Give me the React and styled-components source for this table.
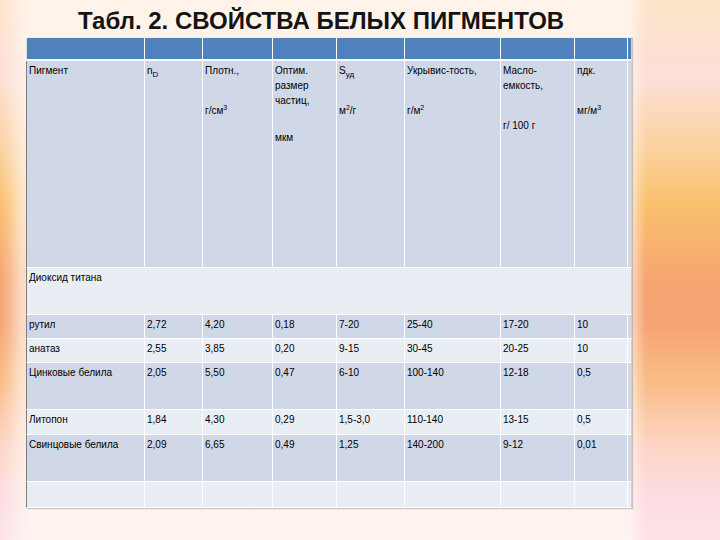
import React from 'react';
import styled, { createGlobalStyle } from 'styled-components';

const GlobalStyle = createGlobalStyle`
  html, body {
    margin: 0;
    padding: 0;
  }
  body {
    font-family: "Liberation Sans", Arial, sans-serif;
  }
`;

const columns = [119, 58, 70, 64, 68, 96, 74, 53, 4];

const rows = [
  { height: 47, tone: 'light', merged: 'Диоксид титана' },
  { height: 24, tone: 'dark', cells: ['рутил', '2,72', '4,20', '0,18', '7-20', '25-40', '17-20', '10'] },
  { height: 24, tone: 'light', cells: ['анатаз', '2,55', '3,85', '0,20', '9-15', '30-45', '20-25', '10'] },
  { height: 47, tone: 'dark', cells: ['Цинковые белила', '2,05', '5,50', '0,47', '6-10', '100-140', '12-18', '0,5'] },
  { height: 25, tone: 'light', cells: ['Литопон', '1,84', '4,30', '0,29', '1,5-3,0', '110-140', '13-15', '0,5'] },
  { height: 47, tone: 'dark', cells: ['Свинцовые белила', '2,09', '6,65', '0,49', '1,25', '140-200', '9-12', '0,01'] },
  { height: 26, tone: 'light', cells: ['', '', '', '', '', '', '', ''] },
];

const tones = {
  dark: '#d0d8e8',
  light: '#e9edf4',
};

export default function App() {
  return (
    <>
      <GlobalStyle />
      <Slide>
        <Title>Табл. 2. СВОЙСТВА БЕЛЫХ ПИГМЕНТОВ</Title>
        <Table>
          <colgroup>
            {columns.map((w, i) => <col key={i} style={{ width: w }} />)}
          </colgroup>
          <thead>
            <HeadRow>
              {columns.map((_, i) => <HeadCell key={i} />)}
            </HeadRow>
          </thead>
          <tbody>
            <Row $height={207}>
              <Cell $tone="dark" $first>
                <Line>Пигмент</Line>
              </Cell>
              <Cell $tone="dark">
                <Line>n<Sub>D</Sub></Line>
              </Cell>
              <Cell $tone="dark">
                <Line>Плотн.,</Line>
                <Unit>г/см<Sup>3</Sup></Unit>
              </Cell>
              <Cell $tone="dark">
                <Line>Оптим.</Line>
                <Line>размер</Line>
                <Line>частиц,</Line>
                <Unit $gap={22}>мкм</Unit>
              </Cell>
              <Cell $tone="dark">
                <Line>S<Sub>уд</Sub></Line>
                <Unit>м<Sup>2</Sup>/г</Unit>
              </Cell>
              <Cell $tone="dark">
                <Line>Укрывис-тость,</Line>
                <Unit>г/м<Sup>2</Sup></Unit>
              </Cell>
              <Cell $tone="dark">
                <Line>Масло-</Line>
                <Line>емкость,</Line>
                <Unit>г/ 100 г</Unit>
              </Cell>
              <Cell $tone="dark">
                <Line>пдк.</Line>
                <Unit>мг/м<Sup>3</Sup></Unit>
              </Cell>
              <Cell $tone="dark" />
            </Row>
            {rows.map((row, r) => (
              <Row key={r} $height={row.height}>
                {row.merged ? (
                  <Cell $tone={row.tone} $first colSpan={9}>
                    <Line>{row.merged}</Line>
                  </Cell>
                ) : (
                  <>
                    {row.cells.map((text, c) => (
                      <Cell key={c} $tone={row.tone} $first={c === 0}>
                        <Line>{text}</Line>
                      </Cell>
                    ))}
                    <Cell $tone={row.tone} />
                  </>
                )}
              </Row>
            ))}
          </tbody>
        </Table>
      </Slide>
    </>
  );
}

const Slide = styled.div`
  width: 720px;
  height: 540px;
  overflow: hidden;
  box-sizing: border-box;
  padding-left: 26px;
  background:
    linear-gradient(to right,
      rgba(255, 247, 242, 0) 0px,
      rgba(255, 247, 242, 0.25) 10px,
      rgba(255, 247, 242, 0.6) 20px,
      rgba(255, 247, 242, 0.78) 30px,
      rgba(255, 247, 242, 0.78) 630px,
      rgba(255, 247, 242, 0.3) 638px,
      rgba(255, 247, 242, 0) 646px),
    linear-gradient(to bottom,
      #fde5c9 0%,
      #fddfd8 14%,
      #fbd19c 28%,
      #f9c06c 38%,
      #f7a471 52%,
      #f6a474 60%,
      #f9bb84 70%,
      #fcd4c2 82%,
      #fddde2 92%,
      #fde3e9 100%);
`;

const Title = styled.h1`
  margin: 0 0 3px 0;
  padding: 7px 0 0 52px;
  height: 27px;
  font-family: "Liberation Sans", Arial, sans-serif;
  font-size: 24px;
  line-height: 27px;
  font-weight: bold;
  color: #141414;
  white-space: nowrap;
`;

const Table = styled.table`
  width: 606px;
  table-layout: fixed;
  border-collapse: separate;
  border-spacing: 0;
  box-shadow: 1px 1px 1px rgba(120, 110, 100, 0.35);
  font-family: "Liberation Sans", Arial, sans-serif;
  font-size: 10px;
  color: #000;
`;

const HeadRow = styled.tr`
  height: 24px;
`;

const HeadCell = styled.th`
  box-sizing: border-box;
  padding: 0;
  background: #4f81bd;
  border-right: 1px solid #fff;
  border-bottom: 2px solid #fff;
  border-top: 1px solid #e8eef6;

  &:first-child {
    border-left: 1px solid #dfe6f0;
  }
  &:last-child {
    border-right: 1px solid #c9cfd8;
  }
`;

const Row = styled.tr`
  height: ${props => props.$height}px;
`;

const Cell = styled.td`
  box-sizing: border-box;
  vertical-align: top;
  padding: 2px 0 0 2px;
  background: ${props => tones[props.$tone]};
  border-right: 1px solid #fff;
  border-bottom: 1px solid #fff;
  border-left: ${props => props.$first ? '1px solid #7d7d7d' : 'none'};
  white-space: nowrap;
  overflow: hidden;

  &:last-child {
    border-right: 1px solid #c9cfd8;
  }
`;

const Line = styled.div`
  line-height: 15px;
  height: 15px;
`;

const Unit = styled.div`
  line-height: 15px;
  margin-top: ${props => props.$gap ?? 25}px;
`;

const Sub = styled.sub`
  font-size: 8px;
  vertical-align: -3px;
  line-height: 0;
`;

const Sup = styled.sup`
  font-size: 7px;
  vertical-align: 4px;
  line-height: 0;
`;
